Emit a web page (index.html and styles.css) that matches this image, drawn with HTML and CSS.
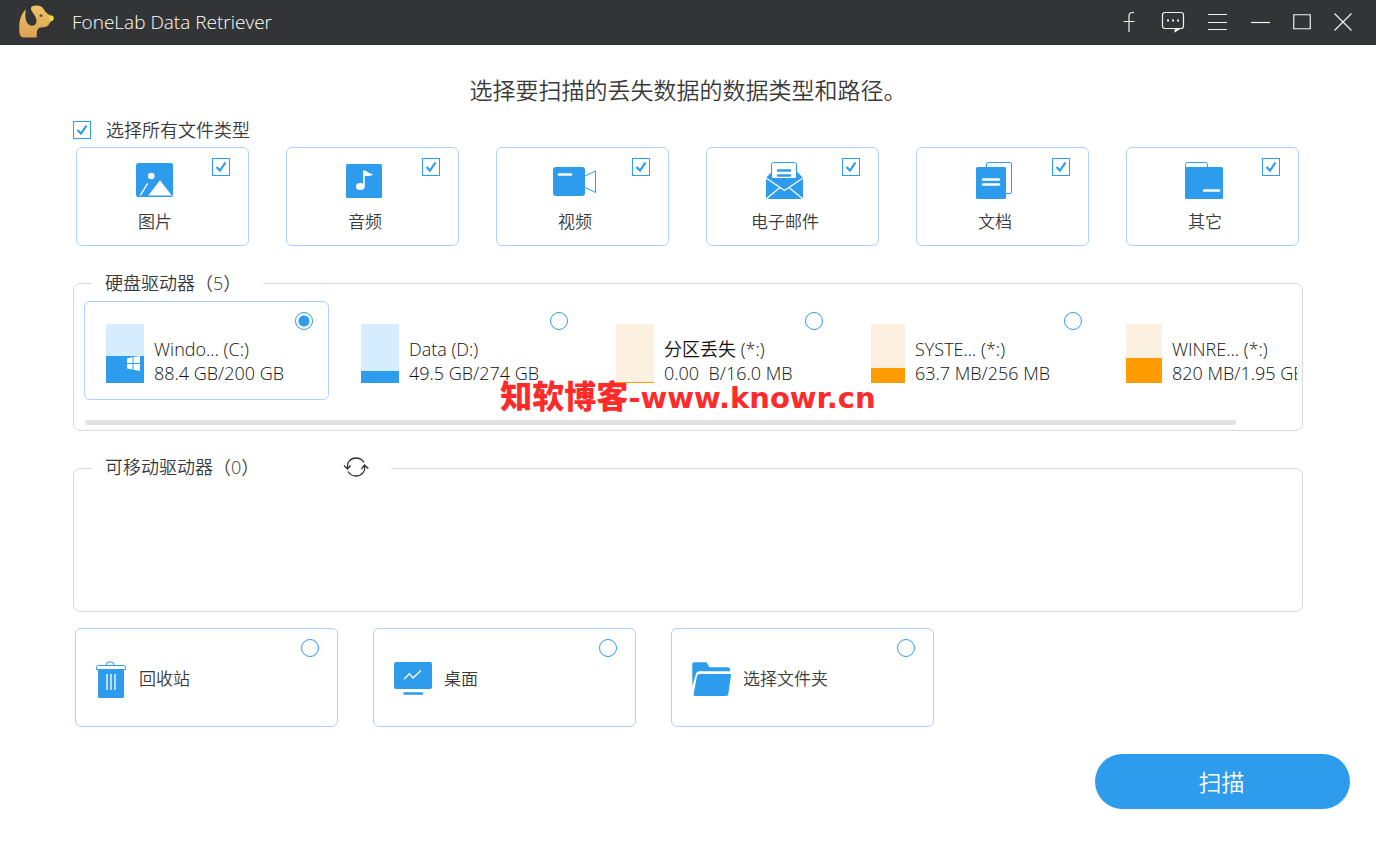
FILE: index.html
```html
<!DOCTYPE html>
<html lang="zh-CN">
<head>
<meta charset="utf-8">
<meta name="viewport" content="width=device-width, initial-scale=1">
<title>FoneLab Data Retriever</title>
<link rel="stylesheet" href="styles.css">
</head>
<body>
<header class="titlebar">
  <svg class="logo" width="36" height="34" viewBox="0 0 36 34" aria-hidden="true">
    <defs>
      <linearGradient id="coat" x1="0" y1="0" x2="0" y2="1">
        <stop offset="0" stop-color="#efc467"/>
        <stop offset="1" stop-color="#dda050"/>
      </linearGradient>
    </defs>
    <path fill="url(#coat)" d="M8 4.300C4 8 1.300 14 1.300 22c0 5-.3 9.500 4 10.500h13.400c.2-3-.2-6 .6-7.500 1-2.200 3-2.500 5.500-2.700 3.500-.3 5.500-1 6.500-3.500l2.700-4-3-5.300C28.500 8 27 6.700 26 4.500 24.500 1.500 22 .5 19 .4c-3.500-.1-5.500.6-6 2.100-.5 2.500 1.500 4.700 3.500 7.800 1.800 2.700 2.700 6 1.500 8.200-1.200 2.300-4.500 2.700-6.500 1.500C7.500 17.700 6.500 11 8 4.300z"/>
    <circle cx="23" cy="10.500" r="1.500" fill="#6d5638"/>
    <path fill="#eadf45" d="M30 11c2-1.300 5.800-1.300 5.800 2 0 2.300-1.700 3.500-3 3.300-1.500-.5-1.100-4-2.800-5.300z"/>
  </svg>
  <h1 class="app-name">FoneLab Data Retriever</h1>
  <div class="app-actions">
    <button class="bar-button" type="button" aria-label="Facebook">
      <svg width="12" height="22" viewBox="0 0 12 22"><path d="M11 1.500H9.500Q6 1.500 6 5v16M.5 10.500h11"/></svg>
    </button>
    <button class="bar-button" type="button" aria-label="反馈">
      <svg width="24" height="22" viewBox="0 0 24 22"><path d="M4 1.500h16q2.500 0 2.500 2.500v11q0 2.500-2.500 2.500h-1l-5 3 .5-3H4q-2.500 0-2.500-2.500V4Q1.500 1.500 4 1.500z"/><path class="solid" d="M14 21l1-4h4.500z"/><path class="dots" d="M6 9.500h2M11 9.500h2M16 9.500h2"/></svg>
    </button>
    <button class="bar-button" type="button" aria-label="菜单">
      <svg width="19" height="18" viewBox="0 0 19 18"><path d="M0 1.500h19M0 9.500h19M0 16.500h19"/></svg>
    </button>
  </div>
  <div class="window-actions">
    <button class="bar-button" type="button" aria-label="最小化">
      <svg width="19" height="18" viewBox="0 0 19 18"><path d="M0 9.500h19"/></svg>
    </button>
    <button class="bar-button" type="button" aria-label="最大化">
      <svg width="18" height="16" viewBox="0 0 18 16"><path d="M.75.750h16.500v14H.750z"/></svg>
    </button>
    <button class="bar-button" type="button" aria-label="关闭">
      <svg width="18" height="18" viewBox="0 0 18 18"><path d="M.5.500l17 17M17.500.500l-17 17"/></svg>
    </button>
  </div>
</header>

<main class="content">
  <h2 class="headline">选择要扫描的丢失数据的数据类型和路径。</h2>

  <label class="select-all"><input class="tick" type="checkbox" checked><span>选择所有文件类型</span></label>

  <div class="types">
    <label class="card type">
      <input class="tick corner" type="checkbox" checked>
      <svg class="icon" width="44" height="38" viewBox="0 0 44 38" aria-hidden="true">
        <rect class="fill" x="3" y="1" width="37" height="34" rx="2.500"/>
        <circle class="paper" cx="18.300" cy="14" r="3.300"/>
        <path class="paper" d="M27 18.300L15.300 33.500h23.500z"/>
        <path class="white-line" d="M14.700 21.300l-7.400 12"/>
      </svg>
      <span>图片</span>
    </label>
    <label class="card type">
      <input class="tick corner" type="checkbox" checked>
      <svg class="icon" width="44" height="38" viewBox="0 0 44 38" aria-hidden="true">
        <rect class="fill" x="3" y="2" width="36" height="34" rx="1.500"/>
        <ellipse class="paper" cx="17.300" cy="24.500" rx="4.400" ry="3.500"/>
        <path class="paper" d="M20 24.500V9l1-.7c2 .3 4 2.700 9.200 4.200-2.500 1.500-5.500 2-8.500 1.300v10.700z"/>
      </svg>
      <span>音频</span>
    </label>
    <label class="card type">
      <input class="tick corner" type="checkbox" checked>
      <svg class="icon" width="44" height="38" viewBox="0 0 44 38" aria-hidden="true">
        <rect class="fill" x="0" y="5" width="32" height="29" rx="3"/>
        <path class="white-line thick" d="M6 12.500h12"/>
        <path class="outline" d="M32 14l10.500-5v21.500L32 25.500"/>
      </svg>
      <span>视频</span>
    </label>
    <label class="card type">
      <input class="tick corner" type="checkbox" checked>
      <svg class="icon" width="44" height="38" viewBox="0 0 44 38" aria-hidden="true">
        <path class="fill" d="M8.500 10L3 16v19q0 2 2 2h33q2 0 2-2V16l-5.500-6z"/>
        <path class="outline paper" d="M8.500 19.500V2.500q0-2 2-2h21q2 0 2 2v17l-12 9z"/>
        <path class="fill" d="M3 16v19q0 2 2 2h33q2 0 2-2V16L21.500 28.500z"/>
        <path class="fill" d="M9 16h24.500v4.500l-12 8L9 20z"/>
        <path class="white-line" d="M3 16l18.500 12.500L40 16M3 37l14-11.500M40 37L26 25.500"/>
        <path class="blue-line" d="M15 8.500h12M15 13.500h12"/>
      </svg>
      <span>电子邮件</span>
    </label>
    <label class="card type">
      <input class="tick corner" type="checkbox" checked>
      <svg class="icon" width="44" height="38" viewBox="0 0 44 38" aria-hidden="true">
        <rect class="outline" x="13.500" y=".5" width="25" height="31" rx="1.500"/>
        <rect class="fill" x="3" y="5" width="30" height="32" rx="1.500"/>
        <path class="white-line thick" d="M10 17.500h16M10 22.500h16"/>
      </svg>
      <span>文档</span>
    </label>
    <label class="card type">
      <input class="tick corner" type="checkbox" checked>
      <svg class="icon" width="44" height="38" viewBox="0 0 44 38" aria-hidden="true">
        <path class="outline" d="M2.500 35V2.500q0-2 2-2h18q2 0 2 2V6"/>
        <rect class="fill" x="2" y="5" width="38" height="32" rx="1.500"/>
        <path class="white-line thick" d="M21 28.500h15"/>
      </svg>
      <span>其它</span>
    </label>
  </div>

  <div class="disk-section">
    <fieldset class="group">
      <legend class="group-title">硬盘驱动器（5）</legend>
      <div class="drives">
        <label class="card drive">
          <input class="dot corner" type="radio" name="source" checked>
          <span class="gauge"><span class="used" style="height:46%">
            <svg width="13" height="15" viewBox="0 0 13 15" aria-hidden="true"><path fill="#fff" d="M0 2.200L5.500 1.200V7H0zM6.500 1L13 0v7H6.500zM0 8h5.500v5.500L0 12.500zM6.500 8H13v7l-6.500-1.200z"/></svg>
          </span></span>
          <span class="drive-text"><span>Windo... (C:)</span><span>88.4 GB/200 GB</span></span>
        </label>
        <label class="card drive">
          <input class="dot corner" type="radio" name="source">
          <span class="gauge"><span class="used" style="height:20%"></span></span>
          <span class="drive-text"><span>Data (D:)</span><span>49.5 GB/274 GB</span></span>
        </label>
        <label class="card drive lost">
          <input class="dot corner" type="radio" name="source">
          <span class="gauge"><span class="used" style="height:2%"></span></span>
          <span class="drive-text"><span>分区丢失 (*:)</span><span>0.00&nbsp; B/16.0 MB</span></span>
        </label>
        <label class="card drive lost wide">
          <input class="dot corner" type="radio" name="source">
          <span class="gauge"><span class="used" style="height:25%"></span></span>
          <span class="drive-text"><span>SYSTE... (*:)</span><span>63.7 MB/256 MB</span></span>
        </label>
        <label class="card drive lost last">
          <input class="dot corner" type="radio" name="source">
          <span class="gauge"><span class="used" style="height:42%"></span></span>
          <span class="drive-text"><span>WINRE... (*:)</span><span>820 MB/1.95 GB</span></span>
        </label>
      </div>
      <div class="scroll-track"><div class="scroll-thumb"></div></div>
    </fieldset>
    <p class="watermark"><span class="watermark-name">知软博客</span><span>-www.knowr.cn</span></p>
  </div>

  <fieldset class="group removable">
    <legend class="group-title with-action">
      <span>可移动驱动器（0）</span>
      <button class="refresh" type="button" aria-label="刷新">
        <svg width="26" height="20" viewBox="0 0 26 20"><path d="M5 12C3 5 8 1 13 1c4 0 6.500 2 8 4.500M21.500 8.500C23 14 18.500 19 13 19c-4 0-6.500-2-8-4.500M1 8.500l3.500 3.500L7.500 8.500M18.500 12l3-4 3.800 3.500"/></svg>
      </button>
    </legend>
  </fieldset>

  <div class="places">
    <label class="card place">
      <input class="dot corner" type="radio" name="source">
      <svg width="31" height="37" viewBox="1 0 31 37" aria-hidden="true">
        <path class="outline" d="M11 4.500q0-3.500 3-3.500h2q3 0 3 3.500M1.500 8.500V6.500q0-2 2-2h25q2 0 2 2v2z"/>
        <path class="fill" d="M3 9h26v26.500q0 1.500-1.500 1.500h-23q-1.500 0-1.500-1.500z"/>
        <path class="white-line" d="M12 13v16M16 13v16M20 13v16"/>
      </svg>
      <span>回收站</span>
    </label>
    <label class="card place">
      <input class="dot corner" type="radio" name="source">
      <svg width="38" height="34" viewBox="0 0 38 34" aria-hidden="true">
        <rect class="fill" x="0" y="0" width="38" height="27" rx="2"/>
        <path class="white-line" d="M10 17.300l5.300-5.600L19 16l8-7.500"/>
        <path class="blue-line" d="M10.500 31.500H28"/>
      </svg>
      <span>桌面</span>
    </label>
    <label class="card place">
      <input class="dot corner" type="radio" name="source">
      <svg width="39" height="34" viewBox="0 0 39 34" aria-hidden="true">
        <path class="fill" d="M.3 24V2Q.3.300 2 .3h12.500l3 5H36q2 0 2 2v2H7q-2.500 0-3 2.500z"/>
        <path class="fill" d="M8 12h29.500q1.700 0 1.500 1.500L36.300 32q-.3 2-2 2H3q-1.700 0-1.400-2L5 14q.5-2 3-2z"/>
      </svg>
      <span>选择文件夹</span>
    </label>
  </div>

  <div class="footer">
    <button class="scan" type="button">扫描</button>
  </div>
</main>
</body>
</html>
```
FILE: styles.css
```css
:root {
  --blue: #2d9cec;
  --card-border: #b0d0ff;
  --group-border: #d9dadb;
  --text: #3a3a3a;
  --text-strong: #111;
  --weight: 350;
}

* {
  box-sizing: border-box;
}

body {
  margin: 0;
  background: #fff;
  color: var(--text);
  font-family: "Open Sans", "Noto Sans CJK SC", sans-serif;
  font-size: 17px;
  font-weight: var(--weight);
  line-height: 24px;
}

.titlebar {
  display: flex;
  align-items: center;
  height: 45px;
  padding: 0 13px 1px 18px;
  background: #333436;
  color: #fff;
}

.app-name {
  flex: 1;
  margin: 0 0 0 18px;
  font-size: 19px;
  font-weight: var(--weight);
}

.app-actions,
.window-actions {
  display: flex;
}

.app-actions {
  margin-right: 1px;
}

.bar-button {
  display: flex;
  align-items: center;
  justify-content: center;
  width: 44px;
  height: 44px;
  padding: 0;
  border: 0;
  background: none;
}

.window-actions .bar-button {
  width: 41px;
}

.bar-button path {
  fill: none;
  stroke: #f2f2f2;
  stroke-width: 1.2;
}

.bar-button .solid {
  fill: #f2f2f2;
  stroke: none;
}

.bar-button .dots {
  stroke-width: 2;
}

.content {
  padding: 29px 73px 34px;
}

.headline {
  margin: 0;
  font-size: 23px;
  font-weight: var(--weight);
  line-height: 32px;
  text-align: center;
}

.select-all {
  display: flex;
  align-items: center;
  gap: 15px;
  width: fit-content;
  margin-top: 12px;
  font-size: 18px;
}

.tick,
.dot {
  flex: none;
  appearance: none;
  width: 18px;
  height: 18px;
  margin: 0;
  border: 1px solid var(--blue);
  background: #fff;
}

.tick:checked {
  background: url("data:image/svg+xml,%3Csvg xmlns='http://www.w3.org/2000/svg' viewBox='0 0 16 16'%3E%3Cpath d='M3.500 8l3.500 3.500 5.500-8' fill='none' stroke='%232d9cec' stroke-width='2.200'/%3E%3C/svg%3E") center / 16px no-repeat;
}

.dot {
  border-radius: 50%;
}

.dot:checked {
  background: radial-gradient(circle, var(--blue) 5px, #fff 6px);
}

.card {
  position: relative;
  display: flex;
  border: 1px solid var(--card-border);
  border-radius: 6px;
}

.corner {
  position: absolute;
  top: 10px;
  right: 18px;
}

.types {
  display: grid;
  grid-template-columns: repeat(6, 1fr);
  gap: 37px;
  margin-top: 5px;
  padding: 0 4px 0 3px;
}

.type {
  flex-direction: column;
  align-items: center;
  gap: 10px;
  padding: 14px 15px 11px 0;
}

.fill {
  fill: var(--blue);
}

.paper {
  fill: #fff;
}

.outline {
  fill: none;
  stroke: var(--blue);
}

.outline.paper {
  fill: #fff;
}

.white-line {
  fill: none;
  stroke: #fff;
  stroke-width: 1.3;
}

.blue-line {
  fill: none;
  stroke: var(--blue);
  stroke-width: 2.5;
  stroke-linecap: round;
}

.thick {
  stroke-width: 2.5;
  stroke-linecap: round;
}

.disk-section {
  position: relative;
  margin-top: 25px;
}

.group {
  min-width: 0;
  margin: 0;
  padding: 6px 5px 5px 10px;
  border: 1px solid var(--group-border);
  border-radius: 7px;
}

.group-title {
  width: 171px;
  margin-left: 8px;
  padding: 0 0 0 13px;
  font-size: 18px;
  white-space: nowrap;
}

.with-action {
  display: flex;
  align-items: center;
  justify-content: space-between;
  width: 299px;
  padding: 0 22px 2px 13px;
}

.refresh {
  display: flex;
  padding: 0;
  border: 0;
  background: none;
}

.refresh path {
  fill: none;
  stroke: #333;
  stroke-width: 1.3;
}

.drives {
  display: flex;
  gap: 10px;
  overflow: hidden;
}

.drive {
  flex: none;
  gap: 10px;
  width: 245px;
  height: 99px;
  padding: 22px 0 0 21px;
  border-color: transparent;
  color: var(--text-strong);
  font-size: 18px;
  white-space: nowrap;
}

.drive:has(:checked) {
  border-color: var(--card-border);
}

.drive .corner {
  right: 15px;
}

.gauge {
  display: flex;
  align-items: flex-end;
  width: 38px;
  height: 59px;
  background: #d6edff;
}

.used {
  display: flex;
  justify-content: flex-end;
  width: 100%;
  padding-right: 4px;
  background: var(--blue);
}

.lost .gauge {
  background: #fcf1e0;
}

.lost .used {
  background: #ff9c00;
}

.wide {
  width: 249px;
  margin-right: -4px;
}

.wide .gauge {
  width: 34px;
}

.last .gauge {
  width: 36px;
}

.drive-text {
  display: flex;
  flex-direction: column;
  padding-top: 13px;
}

.scroll-track {
  margin: 20px 0 0 1px;
}

.scroll-thumb {
  width: 95%;
  height: 5px;
  border-radius: 3px;
  background: #e1e1e1;
}

.watermark {
  position: absolute;
  right: 0;
  bottom: 17px;
  left: 0;
  display: flex;
  align-items: baseline;
  justify-content: center;
  margin: 0;
  color: #ff2a2a;
  font-family: "DejaVu Sans", "Noto Sans CJK SC", sans-serif;
  font-size: 29px;
  font-weight: 700;
  line-height: 32px;
  pointer-events: none;
}

.watermark-name {
  font-size: 32px;
  font-weight: 900;
}

.removable {
  min-height: 157px;
  margin-top: 24px;
}

.places {
  display: grid;
  grid-template-columns: repeat(3, minmax(0, 263px));
  gap: 35px;
  margin-top: 16px;
  padding: 0 2px;
}

.place {
  align-items: center;
  gap: 12px;
  height: 99px;
  padding: 3px 0 0 20px;
}

.scan {
  width: 255px;
  height: 55px;
  padding: 0 2px 2px 0;
  border: 0;
  border-radius: 28px;
  background: var(--blue);
  color: #fff;
  font-family: inherit;
  font-size: 23px;
  font-weight: var(--weight);
}

.footer {
  display: flex;
  justify-content: flex-end;
  margin: 27px -47px 0 0;
}
```
